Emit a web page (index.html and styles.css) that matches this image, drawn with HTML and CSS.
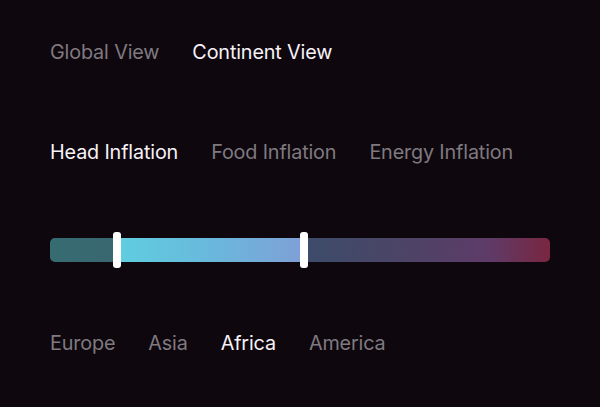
FILE: index.html
```html
<!DOCTYPE html>
<html>
<head>
<meta charset="utf-8">
<link rel="stylesheet" href="styles.css">
</head>
<body>
<div class="page">
  <nav class="tabs view-tabs">
    <span class="tab">Global View</span>
    <span class="tab active">Continent View</span>
  </nav>
  <nav class="tabs metric-tabs">
    <span class="tab active">Head Inflation</span>
    <span class="tab">Food Inflation</span>
    <span class="tab">Energy Inflation</span>
  </nav>
  <div class="slider">
    <div class="track">
      <div class="seg seg-left"></div>
      <div class="seg seg-mid"></div>
      <div class="seg seg-right"></div>
    </div>
    <div class="handle handle-a"></div>
    <div class="handle handle-b"></div>
  </div>
  <nav class="tabs region-tabs">
    <span class="tab">Europe</span>
    <span class="tab">Asia</span>
    <span class="tab active">Africa</span>
    <span class="tab">America</span>
  </nav>
</div>
</body>
</html>
```
FILE: styles.css
```css
html, body {
  margin: 0;
  padding: 0;
  background: #0e070e;
}
body {
  width: 600px;
  height: 407px;
  overflow: hidden;
  font-family: Inter, "Noto Sans", sans-serif;
}
.page {
  display: flex;
  flex-direction: column;
  padding: 41px 50px 0 50px;
}
.tabs {
  display: flex;
  gap: 33px;
  font-size: 19.8px;
  line-height: 22px;
  letter-spacing: -0.15px;
}
.tab {
  color: #7f7a80;
}
.tab.active {
  color: #f7f2f7;
}
.metric-tabs {
  margin-top: 78px;
}
.slider {
  position: relative;
  margin-top: 69px;
  width: 500px;
  height: 36px;
  display: flex;
  align-items: center;
}
.track {
  display: flex;
  width: 500px;
  height: 24px;
  border-radius: 5px;
  overflow: hidden;
}
.seg-left {
  width: 67px;
  background: linear-gradient(to right, #366c72, #3a6670);
}
.seg-mid {
  width: 187px;
  background: linear-gradient(to right, #5fcee0, #69b8dc 50%, #7f9fd6);
}
.seg-right {
  flex: 1;
  background: linear-gradient(to right, #3c4c6a, #4c4466 40%, #5e3b68 75%, #7a2640);
}
.handle {
  position: absolute;
  top: 0;
  width: 8px;
  height: 36px;
  border-radius: 3px;
  background: #ffffff;
}
.handle-a {
  left: 63px;
}
.handle-b {
  left: 250px;
}
.region-tabs {
  margin-top: 64px;
}
```
